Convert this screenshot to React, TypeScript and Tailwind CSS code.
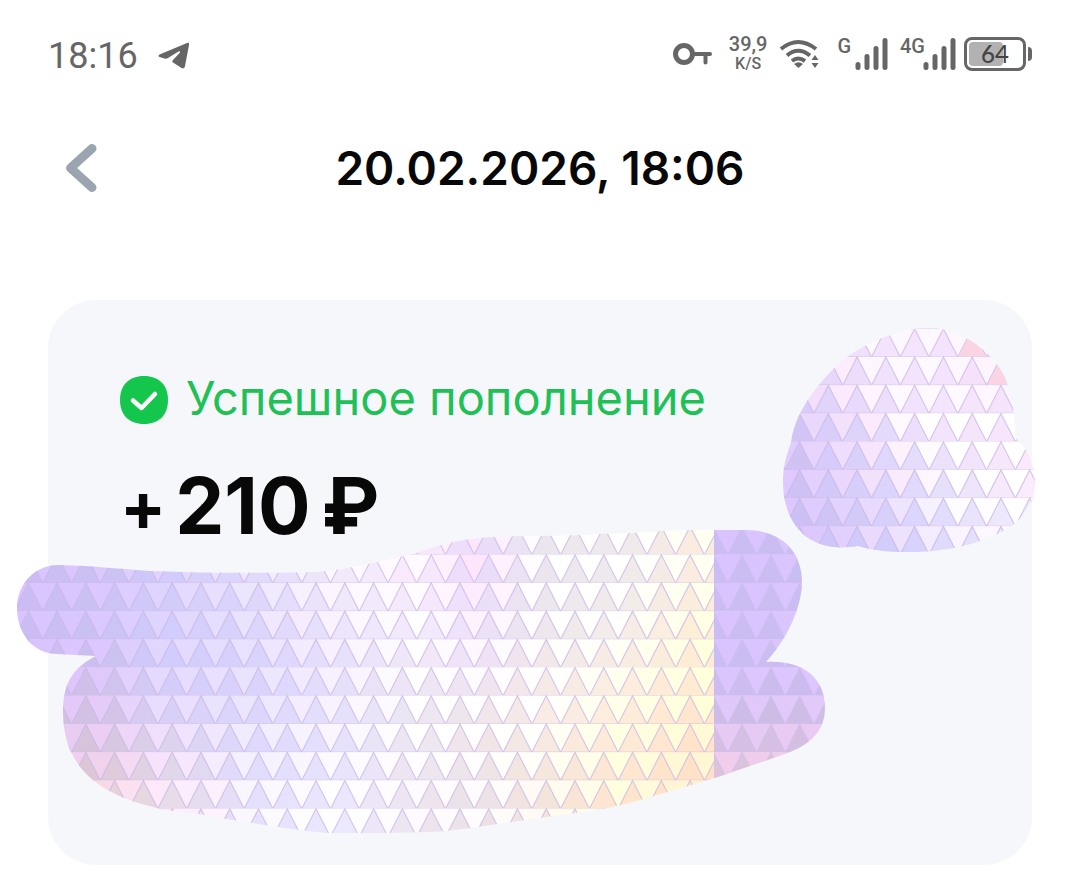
const STEP_X = 28.77;
const STEP_Y = 28.22;
const SEAM = 714;

type Shades = { xs: number[]; ys: number[]; colors: string[][] };

// light: triangles pointing down, dark: triangles pointing up
const mainLight: Shades = {
    xs: [30, 100, 160, 250, 340, 420, 475, 540, 620, 700],
    ys: [570, 625, 667, 710, 752, 800],
    colors: [
        ['d9c4ff', 'dac8ff', 'e0d4fe', 'efe8ff', 'fffaff', 'fffaff', 'fde6fc', 'ffffff', 'ffffff', 'fffff2'],
        ['d9c4ff', 'dac8ff', 'dfd4fe', 'ebe4fe', 'fcf4ff', 'ffffff', 'fdf2fd', 'ffffff', 'fffffc', 'ffffe4'],
        ['d9c4ff', 'ddc6fe', 'e2d8fe', 'e9e2fe', 'f8f0ff', 'ffffff', 'fefaff', 'ffffff', 'fffff2', 'ffffdc'],
        ['e2c6f8', 'e4cbf8', 'e9defe', 'ebe6fe', 'faf3ff', 'ffffff', 'ffffff', 'ffffff', 'ffffe8', 'fffed8'],
        ['ebcbef', 'edcff0', 'f3e0fb', 'f2eefe', 'fcf8ff', 'ffffff', 'ffffff', 'fffff8', 'ffffe0', 'fff8d4'],
        ['f8d2e0', 'fbd9e4', 'feeafa', 'fbf8ff', 'ffffff', 'fefaff', 'fffcff', 'fffaf2', 'ffffdf', 'fff0d0'],
    ],
};

const mainDark: Shades = {
    xs: [30, 100, 160, 250, 340, 420, 475, 540, 620, 700],
    ys: [570, 625, 667, 710, 752, 800],
    colors: [
        ['cbbcf3', 'ccc0f2', 'd0c9fb', 'dfd8fb', 'f2eafa', 'faeafc', 'eadafc', 'ebe6ee', 'efeaec', 'fbece0'],
        ['cbbcf3', 'cbc1f2', 'd0ccfc', 'dad3fc', 'ebe5fc', 'f4ecfc', 'eddffa', 'ede7ed', 'f4ede9', 'feeed6'],
        ['cbbcef', 'cdc0ed', 'd0cbfb', 'd8d1fc', 'e6dffb', 'f0e7f5', 'efe2f5', 'f3e8e8', 'f9eee2', 'ffebd2'],
        ['d1bde1', 'd3c2e3', 'd9cff7', 'dbd5fc', 'e6e1fb', 'ede7f1', 'f0e4eb', 'f7ece5', 'ffedda', 'ffe6cd'],
        ['dac1db', 'd9c4d8', 'ded3e8', 'dfdafd', 'e7e2fc', 'eee8f0', 'efe4e9', 'f7e9de', 'fee8d4', 'ffe2c8'],
        ['e5cad3', 'e8d0d5', 'e9dce4', 'e5e0fb', 'ece8fe', 'ede4ee', 'ebe1e8', 'f2e4db', 'fee5cd', 'ffe0c4'],
    ],
};

const edgeLight: Shades = {
    xs: [714, 830],
    ys: [540, 667, 710, 752, 790],
    colors: [
        ['d9c4ff', 'dac5ff'],
        ['d9c4ff', 'dac5ff'],
        ['dfc8fa', 'e2c9fa'],
        ['ebcbf0', 'ebcbee'],
        ['f5cfe2', 'f5cfe0'],
    ],
};

const edgeDark: Shades = {
    xs: [714, 830],
    ys: [540, 667, 710, 752, 790],
    colors: [
        ['cbbcf3', 'cabff0'],
        ['cbbcf3', 'cbbcf0'],
        ['cebce8', 'cfbde6'],
        ['d8c0e0', 'd9c0de'],
        ['dfc4d8', 'dfc4d8'],
    ],
};

const cloudLight: Shades = {
    xs: [790, 830, 870, 910, 950, 1020],
    ys: [340, 395, 425, 480, 510, 550],
    colors: [
        ['f2e0fb', 'faeafc', 'fef8ff', 'fdf8ff', 'fef8ff', 'fdecf8'],
        ['ead8fa', 'fce6fc', 'fdf5ff', 'fef8ff', 'fdf8ff', 'fef4ff'],
        ['e3d0fc', 'f0defb', 'fbe9fd', 'ffffff', 'ffffff', 'ffffff'],
        ['dfc9ff', 'e6d5fd', 'f2e1fa', 'fdf0fb', 'ffffff', 'ffffff'],
        ['dcc7ff', 'e0cffe', 'e8dafd', 'f1e7fd', 'fdfcff', 'ffffff'],
        ['dac5ff', 'dec9fc', 'e7d8fd', 'eee2fe', 'f7f0ff', 'fffaff'],
    ],
};

const cloudDark: Shades = {
    xs: [790, 830, 870, 910, 950, 1020],
    ys: [340, 395, 425, 480, 510, 550],
    colors: [
        ['e4d6f8', 'ecdcfa', 'f3e3fc', 'f4e4fd', 'f5e2fd', 'fad4e2'],
        ['d8caf7', 'e2d5fa', 'ecdefc', 'f1e3fd', 'f4e4fd', 'f5e2fc'],
        ['d0c2f5', 'dacefa', 'e0d7fa', 'ecdffb', 'f5e5fc', 'f7e5fa'],
        ['cdbff0', 'd3cafa', 'd9d1fc', 'e0dafd', 'e9e2f9', 'fbecfc'],
        ['ccbdf3', 'cec5f4', 'd5cdfa', 'dad5fc', 'e5dffd', 'f2ebfb'],
        ['ccbdf3', 'cfc5fb', 'd0cafb', 'd6d0fc', 'e1dafd', 'efe8fb'],
    ],
};

function locate(stops: number[], v: number) {
    const clamped = Math.min(Math.max(v, stops[0]), stops[stops.length - 1]);
    let i = 0;
    while (i < stops.length - 2 && clamped > stops[i + 1]) i++;
    return { i, t: (clamped - stops[i]) / (stops[i + 1] - stops[i]) };
}

function shadeAt({ xs, ys, colors }: Shades, x: number, y: number) {
    const a = locate(xs, x);
    const b = locate(ys, y);
    const channel = (hex: string, n: number) => parseInt(hex.slice(n * 2, n * 2 + 2), 16);
    const rgb = [0, 1, 2].map((n) => {
        const top = channel(colors[b.i][a.i], n) * (1 - a.t) + channel(colors[b.i][a.i + 1], n) * a.t;
        const bottom = channel(colors[b.i + 1][a.i], n) * (1 - a.t) + channel(colors[b.i + 1][a.i + 1], n) * a.t;
        return Math.round(top * (1 - b.t) + bottom * b.t);
    });
    return `rgb(${rgb.join(',')})`;
}

type TrianglesProps = {
    startX: number;
    startY: number;
    cols: number;
    rows: number;
    light: Shades;
    dark: Shades;
    line: string;
};

function Triangles({ startX, startY, cols, rows, light, dark, line }: TrianglesProps) {
    const half = STEP_X / 2;
    const cells = [];
    for (let r = 0; r < rows; r++) {
        const y = startY + r * STEP_Y;
        const base = y + STEP_Y;
        for (let c = 0; c < cols; c++) {
            const x = startX + c * STEP_X;
            const down = shadeAt(light, x + half, y + 14);
            cells.push(
                <g key={`${r}-${c}`}>
                    <path d={`M${x} ${y}H${x + STEP_X}L${x + half} ${base}Z`} fill={down} stroke={down} strokeWidth="0.6" />
                    <path d={`M${x - half} ${base}L${x} ${y}L${x + half} ${base}Z`} fill={shadeAt(dark, x, y + 14)} />
                    <path d={`M${x - half} ${base}L${x} ${y}L${x + half} ${base}`} stroke={line} strokeWidth="1.2" />
                </g>
            );
        }
        cells.push(
            <path key={`line-${r}`} d={`M${startX - half} ${base}H${startX + cols * STEP_X}`} stroke={line} strokeWidth="1.4" />
        );
    }
    return <g>{cells}</g>;
}

function Scribbles() {
    return (
        <svg
            viewBox="0 300 1080 565"
            className="pointer-events-none absolute -left-12 top-0 h-[565px] w-[1080px] max-w-none"
            fill="none"
            aria-hidden="true"
        >
            <defs>
                <clipPath id="stroke-main">
                    <path d="M60 565C95 566 120 569 150 571C200 573 255 573 300 572.500C345 572 378 561 414 554C438 545 458 540 480 538C510 535 560 537 600 534C635 534 660 530 690 530H745C782 530 802 552 802 582C802 606 788 638 766 662C802 660 825 677 825 708C825 731 810 746 782 755L718 777C688 786 668 792 650 797C618 808 580 812 540 818C500 823 465 830 430 832C395 833 365 833 330 833C290 830 255 823 220 818C205 813 180 813 157 808C110 797 63 775 63 712C63 684 72 668 96 656L57 654C34 654 17 634 17 608C17 584 35 564 60 565Z" />
                </clipPath>
                <clipPath id="seam-left">
                    <rect x="0" y="500" width={SEAM} height="365" />
                </clipPath>
                <clipPath id="seam-right">
                    <rect x={SEAM} y="500" width="200" height="365" />
                </clipPath>
                <clipPath id="stroke-cloud">
                    <path d="M930 328C902 328 869 341 847 357C830 370 795 406 791 443C786 456 783 467 783 482C783 520 805 555 858 546C872 550 888 552 903 552C950 553 990 542 1017 522C1029 508 1035 500 1035 482C1034 465 1029 449 1015 438C1015 422 1014 405 1008 387C1003 360 965 328 930 328Z" />
                </clipPath>
            </defs>
            <g clipPath="url(#stroke-main)">
                <g clipPath="url(#seam-left)">
                    <Triangles startX={-0.4} startY={526.5} cols={26} rows={11} light={mainLight} dark={mainDark} line="#c9b6e6b8" />
                </g>
                <g clipPath="url(#seam-right)">
                    <Triangles startX={713.4} startY={526.5} cols={5} rows={10} light={edgeLight} dark={edgeDark} line="#cbbcee80" />
                </g>
            </g>
            <g clipPath="url(#stroke-cloud)">
                <Triangles startX={770.8} startY={300.6} cols={10} rows={9} light={cloudLight} dark={cloudDark} line="#c9b6e6b8" />
                <path d="M972 337L986 356H959L968 337ZM1000 360L1008 384H988L999 363Z" fill="#fad4e2" />
            </g>
        </svg>
    );
}

function SignalBars() {
    return (
        <svg width="33" height="32" viewBox="0 0 33 32" fill="none" stroke="#666" strokeWidth="5" strokeLinecap="round" aria-hidden="true">
            <path d="M3 26.500V29.500M12 18.500V29.500M21 10.500V29.500M30 2.500V29.500" />
        </svg>
    );
}

function StatusBar() {
    return (
        <div className="flex items-center justify-between px-12 pt-8 font-[Roboto,sans-serif] text-[#666]">
            <div className="flex items-center gap-5">
                <span className="text-[36px] leading-[48px]">18:16</span>
                <svg width="32" height="28" viewBox="0 0 32 28" fill="#666" aria-hidden="true">
                    <path d="M1.500 12.500L29 1Q31.500 0 31 3L27 24Q26.500 27.500 23.500 26L15 20.500Q13.500 19.500 15 18L22 10.500Q22.500 8.500 20.500 9.500L10 16Q8.500 17 6.500 16.500L1.500 15Q-0.500 14 1.500 12.500Z" />
                </svg>
            </div>
            <div className="flex items-center pb-1">
                <svg width="40" height="24" viewBox="0 0 40 24" fill="none" stroke="#666" aria-hidden="true">
                    <circle cx="11" cy="12" r="8.500" strokeWidth="5" />
                    <path d="M20 12H37M32.500 12V20.500" strokeWidth="4" strokeLinecap="round" />
                </svg>
                <div className="ml-4 flex flex-col items-center font-medium">
                    <span className="text-[20px] leading-[20px]">39,9</span>
                    <span className="text-[16px] leading-[20px]">K/S</span>
                </div>
                <svg className="ml-3" width="42" height="32" viewBox="0 0 42 32" fill="none" stroke="#666" strokeWidth="4" aria-hidden="true">
                    <path d="M2 11Q19 -3 37 11M8 17.500Q19 8 31 17.500M13 23Q19 18 26 23" />
                    <path d="M19.500 30L15 26Q19.500 22.500 24 26ZM36 17L39.500 22H32.500ZM36 30L39.500 25H32.500Z" fill="#666" stroke="none" />
                </svg>
                <div className="ml-4 flex items-center">
                    <span className="self-start text-[20px] leading-[16px] font-medium">G</span>
                    <span className="ml-1">
                        <SignalBars />
                    </span>
                </div>
                <div className="ml-3 flex items-center">
                    <span className="self-start text-[20px] leading-[16px] font-medium">4G</span>
                    <span className="-ml-[2px]">
                        <SignalBars />
                    </span>
                </div>
                <div className="ml-2 flex items-center">
                    <div className="relative flex h-[34px] w-[62px] items-center justify-center rounded-[8px] border-[3px] border-[#666]">
                        <span className="absolute left-[2px] top-[2px] h-[24px] w-[34px] rounded-[4px] bg-[#b2b2b2]" />
                        <span className="relative font-[Lato,sans-serif] text-[24px] leading-[28px] font-medium text-[#444]">64</span>
                    </div>
                    <span className="ml-[2px] h-[14px] w-[4px] rounded-r-[4px] bg-[#666]" />
                </div>
            </div>
        </div>
    );
}

function Header() {
    return (
        <header className="mt-[60px] grid grid-cols-[1fr_auto_1fr] items-center px-16">
            <button type="button" aria-label="Назад" className="justify-self-start">
                <svg width="34" height="50" viewBox="0 0 34 50" fill="none" stroke="#9aa5af" strokeWidth="9" strokeLinecap="round" strokeLinejoin="round" aria-hidden="true">
                    <path d="M28 5.500L6.500 25L28 44.500" />
                </svg>
            </button>
            <h1 className="text-[46px] leading-[56px] font-semibold text-[#080808]">20.02.2026, 18:06</h1>
        </header>
    );
}

export default function App() {
    return (
        <div className="overflow-hidden bg-white pb-5 font-[Inter,'Noto_Sans',sans-serif]">
            <StatusBar />
            <Header />
            <main className="relative mx-12 mt-[104px] rounded-[48px] bg-[#f5f7fb] px-[72px] pt-[70px] pb-[311px]">
                <div className="flex items-center gap-[18px]">
                    <svg width="48" height="48" viewBox="0 0 48 48" fill="none" aria-hidden="true">
                        <path d="M24 0C39 0 48 9 48 24S39 48 24 48S0 39 0 24S9 0 24 0Z" fill="#14c64c" />
                        <path d="M13 24.500L21.500 32L35 18" stroke="#fff" strokeWidth="4.500" strokeLinecap="round" strokeLinejoin="round" />
                    </svg>
                    <p className="pb-1 text-[47px] leading-[56px] text-[#1fc055]">Успешное пополнение</p>
                </div>
                <p className="mt-7 flex items-center text-[78px] leading-[96px] font-bold text-[#080808]">
                    <span className="text-[68px]">+</span>
                    <span className="ml-[9px]">210</span>
                    <span className="ml-[11px]">₽</span>
                </p>
                <Scribbles />
            </main>
        </div>
    );
}
